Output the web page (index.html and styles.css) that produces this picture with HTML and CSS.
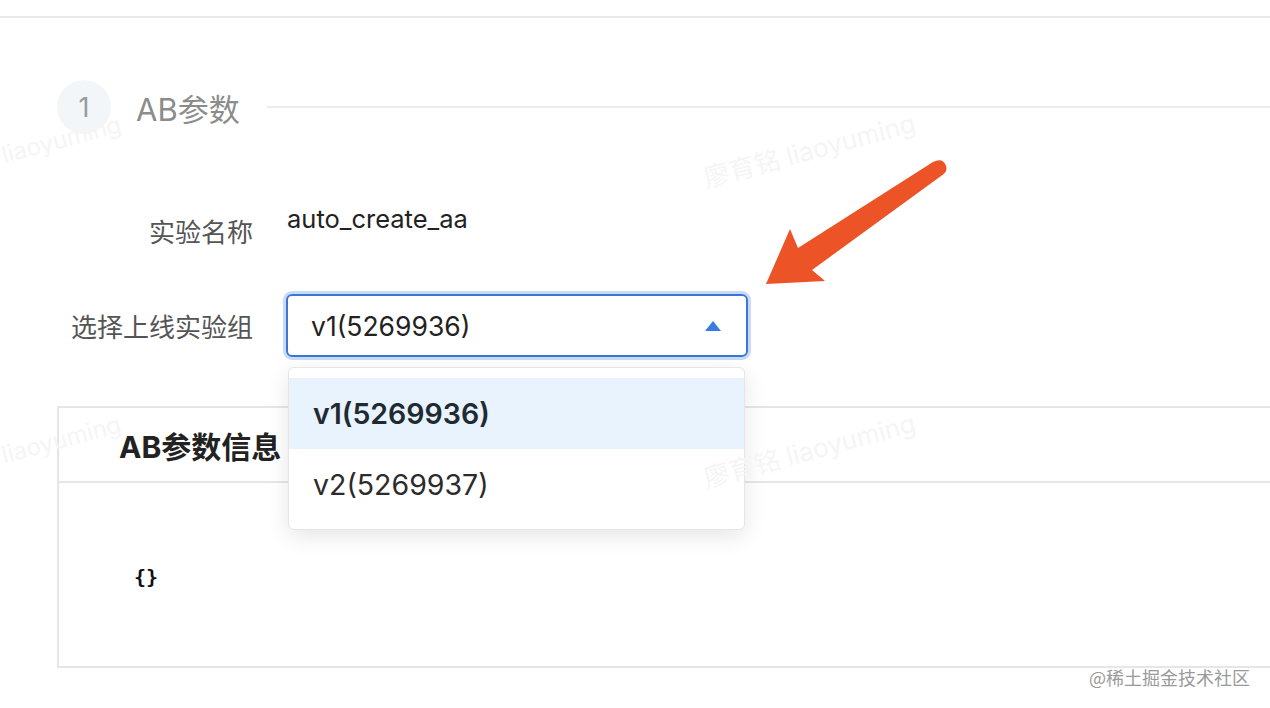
FILE: index.html
```html
<!DOCTYPE html>
<html lang="zh-CN">
<head>
<meta charset="utf-8">
<title>AB参数</title>
<link rel="stylesheet" href="styles.css">
</head>
<body>
<div class="topbar"></div>
<main class="page">
  <div class="step">
    <div class="step-num">1</div>
    <div class="step-title">AB参数</div>
    <div class="step-line"></div>
  </div>

  <div class="form">
    <div class="row row-name">
      <div class="label">实验名称</div>
      <div class="value">auto_create_aa</div>
    </div>
    <div class="row row-select">
      <div class="label">选择上线实验组</div>
      <div class="select-wrap">
        <div class="select">
          <span class="select-text">v1(5269936)</span>
          <span class="caret"></span>
        </div>
        <ul class="dropdown">
          <li class="option active">v1(5269936)</li>
          <li class="option">v2(5269937)</li>
        </ul>
      </div>
    </div>
  </div>

  <section class="card">
    <div class="card-head">AB参数信息</div>
    <div class="card-body"><code class="json">{}</code></div>
  </section>
</main>

<div class="wm wm1">廖育铭 liaoyuming</div>
<div class="wm wm2">廖育铭 liaoyuming</div>
<div class="wm wm3">liaoyuming</div>
<div class="wm wm4">liaoyuming</div>

<svg class="arrow" width="1270" height="708" viewBox="0 0 1270 708">
  <path d="M766,284 L790,229 L798,248 L933,162 Q943,157 946,166 Q948,172 941,176 L812,270 L825,281 Z" fill="#ec5326"/>
</svg>

<div class="credit">@稀土掘金技术社区</div>
</body>
</html>
```

FILE: styles.css
```css
html, body {
  margin: 0;
  padding: 0;
}
body {
  width: 1270px;
  height: 708px;
  overflow: hidden;
  background: #ffffff;
  font-family: "Inter", "Noto Sans CJK SC", sans-serif;
  color: #222;
  position: relative;
}
.topbar {
  height: 16px;
  border-bottom: 2px solid #e9e9e9;
}
.page {
  padding-left: 57px;
}
.step {
  display: flex;
  align-items: center;
  margin-top: 62px;
  height: 54px;
}
.step-num {
  width: 54px;
  height: 54px;
  border-radius: 50%;
  background: #f3f6f8;
  color: #9a9a9a;
  font-size: 27px;
  display: flex;
  align-items: center;
  justify-content: center;
}
.step-title {
  margin-left: 25px;
  font-size: 31px;
  color: #8c8c8c;
}
.step-line {
  flex: 1;
  margin-left: 27px;
  height: 2px;
  background: #ececec;
}
.form {
  margin-top: 76px;
}
.row {
  display: flex;
}
.label {
  width: 196px;
  text-align: right;
  font-size: 26px;
  color: #555;
  flex: none;
}
.row-name .label {
  padding-top: 2px;
}
.value {
  margin-left: 34px;
  font-size: 25.5px;
  color: #222;
  margin-top: -7px;
}
.row-select {
  margin-top: 45px;
  align-items: center;
}
.select-wrap {
  margin-left: 33px;
  position: relative;
}
.select {
  height: 59px;
  border: 2px solid #3f74d6;
  border-radius: 6px;
  box-shadow: 0 0 0 3px #c6dcf6;
  display: flex;
  align-items: center;
  justify-content: space-between;
  padding: 0 25px 0 23px;
  box-sizing: content-box;
  width: 410px;
}
.select-text {
  font-size: 26.5px;
  color: #222;
}
.caret {
  width: 0;
  height: 0;
  border-left: 8px solid transparent;
  border-right: 8px solid transparent;
  border-bottom: 10px solid #3a7be0;
}
.dropdown {
  position: absolute;
  left: 2px;
  top: 73px;
  width: 455px;
  margin: 0;
  padding: 10px 0 9px;
  list-style: none;
  background: #fff;
  border: 1px solid #e6e6e6;
  border-radius: 6px;
  box-shadow: 0 6px 22px rgba(0,0,0,0.10);
  z-index: 5;
}
.option {
  height: 71px;
  display: flex;
  align-items: center;
  padding-left: 24px;
  font-size: 28.5px;
  color: #2b2b2b;
}
.option.active {
  background: #e9f3fd;
  font-weight: 600;
  color: #1f2a33;
}
.card {
  margin-top: 49px;
  margin-right: -20px;
  border: 2px solid #e6e6e6;
  height: 258px;
  display: flex;
  flex-direction: column;
}
.card-head {
  height: 73px;
  border-bottom: 2px solid #e6e6e6;
  display: flex;
  align-items: center;
  padding-left: 60px;
  font-size: 30px;
  font-weight: 700;
  color: #222;
}
.card-body {
  flex: 1;
  padding-left: 75px;
  display: flex;
  align-items: center;
  padding-top: 4px;
}
.json {
  font-family: "DejaVu Sans Mono", monospace;
  font-size: 20px;
  color: #111;
  font-weight: 600;
}
.wm {
  position: absolute;
  font-size: 26px;
  color: #f5f5f5;
  transform: rotate(-15deg);
  white-space: nowrap;
  pointer-events: none;
  z-index: 6;
}
.wm1 { left: 700px; top: 130px; }
.wm2 { left: 700px; top: 430px; }
.wm3 { left: 0px; top: 125px; font-size: 24px; }
.wm4 { left: 0px; top: 425px; font-size: 24px; }
.arrow {
  position: absolute;
  left: 0;
  top: 0;
  z-index: 7;
  pointer-events: none;
}
.credit {
  position: absolute;
  right: 20px;
  top: 664px;
  font-size: 18px;
  color: #9a9a9a;
  font-family: "Noto Sans CJK SC", sans-serif;
}
```
